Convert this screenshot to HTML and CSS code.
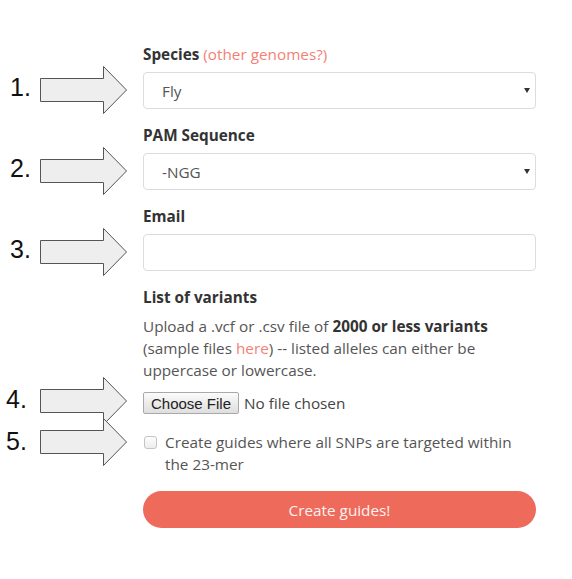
FILE: index.html
```html
<!DOCTYPE html>
<html lang="en">
<head>
  <meta charset="UTF-8">
  <meta name="viewport" content="width=device-width, initial-scale=1.0">
  <title>Create guides</title>
  <link rel="stylesheet" href="styles.css">
</head>
<body>
  <form class="guide-form">
    <!-- Species -->
    <div class="field">
      <label class="field-label" for="species">Species <a href="#" class="aside">(other genomes?)</a></label>
      <div class="mark"><span class="num">1.</span><svg class="arrow" width="88" height="48" viewBox="0 0 88 48"><polygon points="0.5,12.5 63.5,12.5 63.5,0.5 86.5,24 63.5,47.5 63.5,35.5 0.5,35.5"/></svg></div>
      <div class="select-wrap">
        <select id="species"><option>Fly</option></select>
      </div>
    </div>

    <!-- PAM -->
    <div class="field">
      <label class="field-label" for="pam">PAM Sequence</label>
      <div class="mark"><span class="num">2.</span><svg class="arrow" width="88" height="48" viewBox="0 0 88 48"><polygon points="0.5,12.5 63.5,12.5 63.5,0.5 86.5,24 63.5,47.5 63.5,35.5 0.5,35.5"/></svg></div>
      <div class="select-wrap">
        <select id="pam"><option>-NGG</option></select>
      </div>
    </div>

    <!-- Email -->
    <div class="field">
      <label class="field-label" for="email">Email</label>
      <div class="mark"><span class="num">3.</span><svg class="arrow" width="88" height="48" viewBox="0 0 88 48"><polygon points="0.5,12.5 63.5,12.5 63.5,0.5 86.5,24 63.5,47.5 63.5,35.5 0.5,35.5"/></svg></div>
      <input type="email" id="email" class="text-input">
    </div>

    <!-- Variants -->
    <div class="field">
      <label class="field-label" for="variants">List of variants</label>
      <p class="help">Upload a .vcf or .csv file of <b>2000 or less variants</b> (sample files <a href="#" class="aside">here</a>) -- listed alleles can either be uppercase or lowercase.</p>
      <div class="mark mark-file"><span class="num nudge">4.</span><svg class="arrow" width="88" height="48" viewBox="0 0 88 48"><polygon points="0.5,12.5 63.5,12.5 63.5,0.5 86.5,24 63.5,47.5 63.5,35.5 0.5,35.5"/></svg></div>
      <input type="file" id="variants" class="file-input">
      <div class="mark mark-check"><span class="num nudge">5.</span><svg class="arrow" width="88" height="48" viewBox="0 0 88 48"><polygon points="0.5,12.5 63.5,12.5 63.5,0.5 86.5,24 63.5,47.5 63.5,35.5 0.5,35.5"/></svg></div>
      <label class="check">
        <input type="checkbox">
        <span>Create guides where all SNPs are targeted within the 23-mer</span>
      </label>
    </div>

    <div class="field field-submit">
      <button type="button" class="submit">Create guides!</button>
    </div>
  </form>
</body>
</html>
```

FILE: styles.css
```css
body {
  margin: 0;
  font-family: 'Open Sans', sans-serif;
  font-size: 15.3px;
  color: #555;
  background-color: #ffffff;
}

.guide-form {
  width: 536px;
  padding-top: 44px;
}

.field {
  display: grid;
  grid-template-columns: 143px 393px;
  margin-bottom: 16px;
}

.field-submit {
  margin-top: 1px;
}

.field-label {
  grid-column: 2;
  font-weight: 700;
  color: #333;
  line-height: 20px;
  margin-bottom: 8px;
}

.aside {
  color: #f47f76;
  font-weight: 400;
  text-decoration: none;
}

/* Annotation marks on the left */
.mark {
  grid-column: 1;
  align-self: center;
  height: 0;
  display: flex;
  align-items: center;
  padding-left: 10px;
}

.num {
  width: 30px;
  margin-bottom: 6px;
  font-family: 'Liberation Sans', Arial, sans-serif;
  font-size: 25px;
  color: #111;
  line-height: 1;
}

.num.nudge {
  margin-left: -4px;
  width: 34px;
  margin-bottom: 4px;
}

.arrow {
  flex-shrink: 0;
  margin-bottom: 2px;
  overflow: visible;
}

.arrow polygon {
  fill: #eeeeee;
  stroke: #555;
  stroke-width: 1;
}

.mark-file {
  margin-top: -20px;
}

.mark-check {
  align-self: start;
  margin-top: 12px;
}

/* Controls */
.select-wrap {
  grid-column: 2;
  position: relative;
}

.select-wrap::after {
  content: "";
  position: absolute;
  right: 6px;
  top: 50%;
  margin-top: -3px;
  border-left: 3.5px solid transparent;
  border-right: 3.5px solid transparent;
  border-top: 5px solid #333;
}

select,
.text-input {
  grid-column: 2;
  box-sizing: border-box;
  width: 100%;
  height: 37px;
  margin: 0;
  padding: 0 18px;
  border: 1px solid #dcdcdc;
  border-radius: 4px;
  background-color: #fff;
  font: inherit;
  color: #555;
  appearance: none;
  -webkit-appearance: none;
}

.help {
  grid-column: 2;
  margin: 0 0 11px;
  line-height: 22px;
}

.help b {
  color: #333;
}

.file-input {
  grid-column: 2;
  margin: 0 0 17px;
  font-family: 'Open Sans', sans-serif;
  font-size: 15.3px;
  color: #444;
}

.file-input::file-selector-button {
  height: 22px;
  margin: 0 5px 0 0;
  padding: 0 7px;
  border: 1px solid #a9a9a9;
  border-radius: 2px;
  background: linear-gradient(#fbfbfb, #dedede);
  font-family: 'Liberation Sans', Arial, sans-serif;
  font-size: 15px;
  color: #222;
}

.check {
  grid-column: 2;
  display: flex;
  gap: 8px;
  align-items: flex-start;
  line-height: 22px;
}

.check input {
  flex-shrink: 0;
  width: 13px;
  height: 13px;
  margin: 5px 0 0 1px;
  border: 1px solid #c4c4c4;
  border-radius: 3px;
  background: linear-gradient(#fdfdfd, #ececec);
  appearance: none;
  -webkit-appearance: none;
}

.submit {
  grid-column: 2;
  height: 37px;
  border: none;
  border-radius: 19px;
  background-color: #ee6a5b;
  color: #fff2f0;
  font: inherit;
  cursor: pointer;
}
```
